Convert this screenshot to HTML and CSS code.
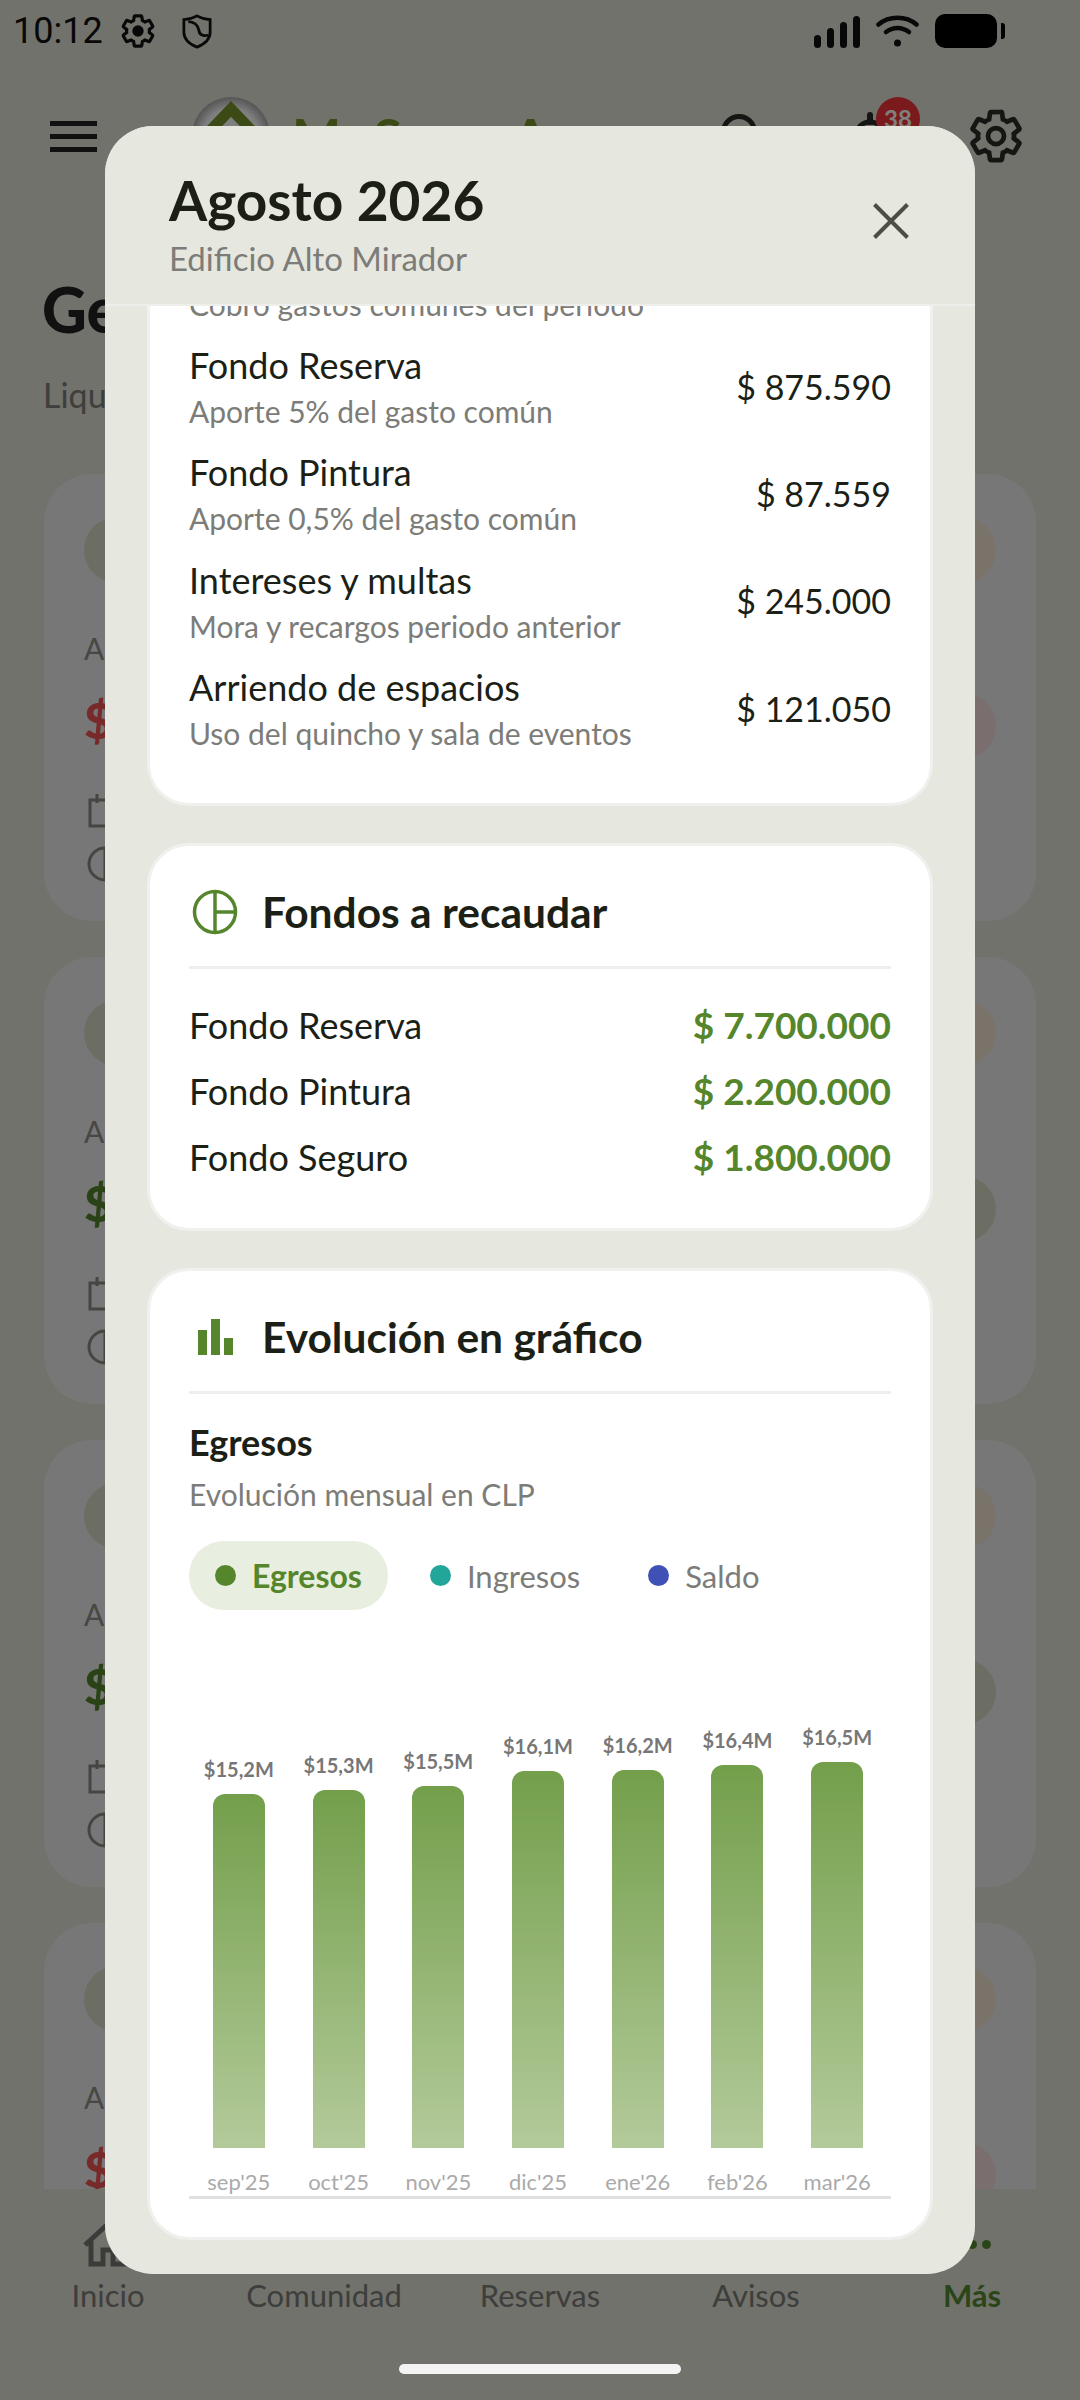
FILE: index.html
```html
<!DOCTYPE html>
<html lang="es">
<head>
  <meta charset="UTF-8" />
  <title>Agosto 2026</title>
  <link rel="stylesheet" href="styles.css">
</head>
<body>

  <svg class="defs" width="0" height="0">
    <symbol id="gear" viewBox="0 0 24 24">
      <path d="M19.14 12.94c.04-.3.06-.61.06-.94 0-.32-.02-.64-.07-.94l2.03-1.58a.49.49 0 0 0 .12-.61l-1.92-3.32a.488.488 0 0 0-.59-.22l-2.39.96c-.5-.38-1.03-.7-1.62-.94l-.36-2.54a.484.484 0 0 0-.48-.41h-3.84c-.24 0-.43.17-.47.41l-.36 2.54c-.59.24-1.13.57-1.62.94l-2.39-.96c-.22-.08-.47 0-.59.22L2.74 8.87c-.12.21-.08.47.12.61l2.03 1.58c-.05.3-.09.63-.09.94s.02.64.07.94l-2.03 1.58a.49.49 0 0 0-.12.61l1.92 3.32c.12.22.37.29.59.22l2.39-.96c.5.38 1.03.7 1.62.94l.36 2.54c.05.24.24.41.48.41h3.84c.24 0 .44-.17.47-.41l.36-2.54c.59-.24 1.13-.56 1.62-.94l2.39.96c.22.08.47 0 .59-.22l1.92-3.32c.12-.22.07-.47-.12-.61l-2.01-1.58z"/>
    </symbol>
    <symbol id="cal" viewBox="0 0 36 36">
      <path d="M3 7h30v26H3zM10 1v9M26 1v9" fill="none" stroke="#8a8a86" stroke-width="3"/>
    </symbol>
    <symbol id="pie" viewBox="0 0 36 36">
      <path d="M18 2a16 16 0 1 0 0 32a16 16 0 1 0 0-32zM18 2v32" fill="none" stroke="#8a8a86" stroke-width="3"/>
    </symbol>
  </svg>

  <div class="page">
    <div class="status-bar">
      <span class="clock">10:12</span>
      <svg class="st-gear" viewBox="0 0 24 24"><use href="#gear" fill="none" stroke="#111" stroke-width="2"/><circle cx="12" cy="12" r="3.6" fill="#111"/></svg>
      <svg class="st-shield" viewBox="0 0 24 28" fill="none" stroke="#111" stroke-width="2.2"><path d="M12 1.500c3.500 2 7 2.800 10.500 3v10c0 5.500-4.500 9.500-10.500 12C6 24 1.500 20 1.500 14.500v-10C5 4.300 8.500 3.500 12 1.500z"/><path d="M5 6c4.500 0 8 3 8.500 7s3.500 5 7.500 4"/></svg>
      <div class="st-right">
        <div class="signal"><i class="s1"></i><i class="s2"></i><i class="s3"></i><i class="s4"></i></div>
        <svg class="wifi" viewBox="0 0 43 32" fill="none" stroke="#111" stroke-width="4.500" stroke-linecap="round"><path d="M2.500 9.500C13 .5 30 .5 40.500 9.500"/><path d="M10 17c7-5.500 16-5.500 23 0"/><circle cx="21.500" cy="28" r="3.500" fill="#111" stroke="none"/></svg>
        <div class="battery"></div>
        <div class="battery-nub"></div>
      </div>
    </div>

    <div class="app-bar">
      <div class="burger"><i></i><i></i><i></i></div>
      <div class="logo">
        <svg viewBox="0 0 78 78"><defs><radialGradient id="lg"><stop offset=".7" stop-color="#fff"/><stop offset="1" stop-color="#aaa"/></radialGradient></defs><circle cx="39" cy="39" r="39" fill="url(#lg)"/><path d="M16 36L39 12l23 24" fill="none" stroke="#78942a" stroke-width="11"/></svg>
      </div>
      <span class="brand">MoSomoA</span>
      <div class="app-actions">
        <svg class="search" viewBox="0 0 48 48" fill="none" stroke="#2a2a28" stroke-width="5"><circle cx="20" cy="20" r="15.500"/><path d="M31 31l13 13"/></svg>
        <div class="bell">
          <svg viewBox="0 0 48 48" fill="none" stroke="#2a2a28" stroke-width="6" stroke-linecap="round"><path d="M24 3v7"/><path d="M10 36V24c0-8 6-14 14-14s14 6 14 14v12z" stroke-width="5"/></svg>
          <span class="badge">38</span>
        </div>
        <svg class="app-gear" viewBox="0 0 24 24"><use href="#gear" fill="none" stroke="#2a2a28" stroke-width="1.900"/><circle cx="12" cy="12" r="3.200" fill="none" stroke="#2a2a28" stroke-width="1.900"/></svg>
      </div>
    </div>

    <h1 class="page-title">Gestión de gastos</h1>
    <p class="page-sub">Liquidaciones por período</p>

    <div class="bg-list">
      <div class="bg-card">
        <div class="bg-top"><span class="blob"></span><span class="blob tone-warm"></span></div>
        <div class="bg-label">A pagar</div>
        <div class="bg-amount"><span class="money money-red">$ 245.000</span><span class="blob tone-red"></span></div>
        <div class="bg-meta first"><svg class="meta-icon"><use href="#cal"/></svg></div>
        <div class="bg-meta"><svg class="meta-icon"><use href="#pie"/></svg></div>
      </div>
      <div class="bg-card">
        <div class="bg-top"><span class="blob"></span><span class="blob tone-warm"></span></div>
        <div class="bg-label">A pagar</div>
        <div class="bg-amount"><span class="money money-green">$ 310.200</span><span class="blob"></span></div>
        <div class="bg-meta first"><svg class="meta-icon"><use href="#cal"/></svg></div>
        <div class="bg-meta"><svg class="meta-icon"><use href="#pie"/></svg></div>
      </div>
      <div class="bg-card">
        <div class="bg-top"><span class="blob"></span><span class="blob tone-warm"></span></div>
        <div class="bg-label">A pagar</div>
        <div class="bg-amount"><span class="money money-green">$ 298.400</span><span class="blob"></span></div>
        <div class="bg-meta first"><svg class="meta-icon"><use href="#cal"/></svg></div>
        <div class="bg-meta"><svg class="meta-icon"><use href="#pie"/></svg></div>
      </div>
      <div class="bg-card">
        <div class="bg-top"><span class="blob"></span><span class="blob tone-warm"></span></div>
        <div class="bg-label">A pagar</div>
        <div class="bg-amount"><span class="money money-red">$ 120.000</span><span class="blob tone-red"></span></div>
      </div>
    </div>

    <nav class="bottom-nav">
      <div class="nav-item">
        <svg class="nav-icon" viewBox="0 0 52 46" fill="none" stroke="#777773" stroke-width="5"><path d="M3 24L26 3l23 21M9 20v23h12V29h10v14h12V20"/></svg>
        <span>Inicio</span>
      </div>
      <div class="nav-item"><i class="nav-icon"></i><span>Comunidad</span></div>
      <div class="nav-item"><i class="nav-icon"></i><span>Reservas</span></div>
      <div class="nav-item"><i class="nav-icon"></i><span>Avisos</span></div>
      <div class="nav-item active">
        <div class="nav-icon dots"><i></i><i></i><i></i></div>
        <span>Más</span>
      </div>
    </nav>
  </div>

  <div class="scrim"></div>

  <div class="modal">
    <div class="modal-head">
      <div>
        <h2 class="modal-title">Agosto 2026</h2>
        <p class="modal-sub">Edificio Alto Mirador</p>
      </div>
      <svg class="close" viewBox="0 0 36 36" fill="none" stroke="#4b4e45" stroke-width="4"><path d="M1.500 1.500l33 33M34.500 1.500l-33 33"/></svg>
    </div>

    <div class="modal-body">
      <section class="card card-lines">
        <div class="line-rows">
          <div class="line-row">
            <div><div class="line-name">Gastos comunes</div><div class="line-note">Cobro gastos comunes del periodo</div></div>
            <div class="line-val">$ 17.511.800</div>
          </div>
          <div class="line-row">
            <div><div class="line-name">Fondo Reserva</div><div class="line-note">Aporte 5% del gasto común</div></div>
            <div class="line-val">$ 875.590</div>
          </div>
          <div class="line-row">
            <div><div class="line-name">Fondo Pintura</div><div class="line-note">Aporte 0,5% del gasto común</div></div>
            <div class="line-val">$ 87.559</div>
          </div>
          <div class="line-row">
            <div><div class="line-name">Intereses y multas</div><div class="line-note">Mora y recargos periodo anterior</div></div>
            <div class="line-val">$ 245.000</div>
          </div>
          <div class="line-row">
            <div><div class="line-name">Arriendo de espacios</div><div class="line-note">Uso del quincho y sala de eventos</div></div>
            <div class="line-val">$ 121.050</div>
          </div>
        </div>
      </section>

      <section class="card">
        <div class="card-head">
          <svg class="card-icon" viewBox="0 0 46 46" fill="none" stroke="#55862c" stroke-width="3.500"><circle cx="23" cy="23" r="20.500"/><path d="M23 2.500v41M23 23h20.500"/></svg>
          <h3>Fondos a recaudar</h3>
        </div>
        <div class="fund-rows">
          <div class="fund-row"><span>Fondo Reserva</span><b>$ 7.700.000</b></div>
          <div class="fund-row"><span>Fondo Pintura</span><b>$ 2.200.000</b></div>
          <div class="fund-row"><span>Fondo Seguro</span><b>$ 1.800.000</b></div>
        </div>
      </section>

      <section class="card card-chart">
        <div class="card-head">
          <svg class="card-icon" viewBox="0 0 46 46" fill="#55862c"><rect x="6" y="16" width="9" height="25"/><rect x="19" y="5" width="9" height="36"/><rect x="32" y="24" width="9" height="17"/></svg>
          <h3>Evolución en gráfico</h3>
        </div>
        <div class="chart-title">Egresos</div>
        <div class="chart-sub">Evolución mensual en CLP</div>
        <div class="chips">
          <div class="chip on"><i class="dot dot-green"></i>Egresos</div>
          <div class="chip"><i class="dot dot-teal"></i>Ingresos</div>
          <div class="chip"><i class="dot dot-blue"></i>Saldo</div>
        </div>
        <div class="chart">
          <div class="col"><span class="val">$15,2M</span><div class="bar" style="height:354px"></div><span class="month">sep'25</span></div>
          <div class="col"><span class="val">$15,3M</span><div class="bar" style="height:358px"></div><span class="month">oct'25</span></div>
          <div class="col"><span class="val">$15,5M</span><div class="bar" style="height:362px"></div><span class="month">nov'25</span></div>
          <div class="col"><span class="val">$16,1M</span><div class="bar" style="height:377px"></div><span class="month">dic'25</span></div>
          <div class="col"><span class="val">$16,2M</span><div class="bar" style="height:378px"></div><span class="month">ene'26</span></div>
          <div class="col"><span class="val">$16,4M</span><div class="bar" style="height:383px"></div><span class="month">feb'26</span></div>
          <div class="col"><span class="val">$16,5M</span><div class="bar" style="height:386px"></div><span class="month">mar'26</span></div>
        </div>
      </section>
    </div>
  </div>

  <div class="home-bar"></div>

</body>
</html>
```

FILE: styles.css
```css
:root {
  --font: "Lato", "Noto Sans", sans-serif;
  --green: #55862c;
  --ink: #1c1f16;
  --muted: #7c7c78;
  --modal-bg: #e6e7df;
}

* {
  box-sizing: border-box;
}

body {
  margin: 0;
  width: 1080px;
  height: 2400px;
  position: relative;
  overflow: hidden;
  font-family: var(--font);
  color: var(--ink);
}

.defs {
  position: absolute;
}

/* page behind the dialog */

.page {
  height: 2400px;
  background: #e3e4d7;
  display: flex;
  flex-direction: column;
}

.status-bar {
  height: 62px;
  padding: 14px 75px 0 13px;
  display: flex;
  align-items: flex-start;
}

.clock {
  font-family: Roboto, sans-serif;
  font-size: 36px;
  line-height: 34px;
  color: #111;
  width: 104px;
}

.st-gear {
  width: 38px;
  height: 38px;
  margin: -2px 0 0 2px;
}

.st-shield {
  width: 30px;
  height: 35px;
  margin: 0 0 0 25px;
}

.st-right {
  margin-left: auto;
  display: flex;
  align-items: flex-start;
}

.signal {
  display: flex;
  align-items: flex-end;
  gap: 6px;
  height: 33px;
  margin: 1px 16px 0 0;
}

.signal i {
  width: 7px;
  background: #111;
  border-radius: 4px;
}

.s1 { height: 13px; }
.s2 { height: 20px; }
.s3 { height: 26px; }
.s4 { height: 32px; }

.wifi {
  width: 43px;
  height: 32px;
  margin: 1px 16px 0 0;
}

.battery {
  width: 62px;
  height: 34px;
  background: #000;
  border-radius: 10px;
}

.battery-nub {
  width: 4px;
  height: 16px;
  margin: 9px 0 0 4px;
  background: #000;
  border-radius: 0 3px 3px 0;
}

.app-bar {
  height: 148px;
  padding: 0 54px 0 50px;
  display: flex;
  align-items: center;
}

.burger {
  width: 47px;
  display: flex;
  flex-direction: column;
  gap: 8px;
}

.burger i {
  height: 5px;
  background: #222;
}

.logo {
  width: 78px;
  height: 78px;
  margin-left: 95px;
}

.logo svg {
  display: block;
}

.brand {
  font-size: 52px;
  font-weight: 700;
  letter-spacing: 2px;
  color: #78942a;
  margin-left: 22px;
}

.app-actions {
  margin-left: auto;
  display: flex;
  align-items: center;
}

.search {
  width: 48px;
  height: 48px;
}

.bell {
  width: 48px;
  height: 48px;
  margin-left: 79px;
  position: relative;
}

.badge {
  position: absolute;
  top: -15px;
  left: 30px;
  width: 44px;
  height: 44px;
  border-radius: 50%;
  background: #f43438;
  color: #fff;
  font-size: 24px;
  font-weight: 700;
  text-align: center;
  line-height: 44px;
}

.app-gear {
  width: 60px;
  height: 60px;
  margin-left: 72px;
}

.page-title {
  margin: 64px 0 0 42px;
  font-size: 62px;
  line-height: 70px;
  font-weight: 900;
  color: #222;
}

.page-sub {
  margin: 29px 0 0 43px;
  font-size: 34px;
  line-height: 44px;
  color: #7c7c78;
}

.bg-list {
  margin: 57px 44px 0;
  height: 1715px;
  overflow: hidden;
}

.bg-card {
  height: 447px;
  margin-bottom: 36px;
  padding: 43px 40px 0;
  background: #eeeeee;
  border-radius: 48px;
}

.bg-top,
.bg-amount {
  display: flex;
  justify-content: space-between;
  align-items: center;
}

.blob {
  width: 66px;
  height: 66px;
  border-radius: 50%;
  background: #d8dac6;
}

.tone-warm { background: #f4e6d4; }
.tone-red { background: #f4dcdc; }

.bg-label {
  margin-top: 47px;
  font-size: 30px;
  line-height: 36px;
  color: #8e8e8a;
}

.bg-amount {
  margin-top: 24px;
}

.money {
  font-size: 50px;
  font-weight: 900;
  margin-bottom: 12px;
}

.money-red { color: #f05555; }
.money-green { color: var(--green); }

.bg-meta {
  height: 36px;
  margin-top: 17px;
}

.bg-meta.first {
  margin-top: 31px;
}

.meta-icon {
  display: block;
  width: 36px;
  height: 36px;
  margin-left: 3px;
}

.bottom-nav {
  flex: 1;
  display: grid;
  grid-template-columns: repeat(5, 216px);
}

.nav-item {
  display: flex;
  flex-direction: column;
  align-items: center;
  padding-top: 32px;
  font-size: 31px;
  line-height: 36px;
  color: #7c7c78;
}

.nav-icon {
  display: block;
  width: 52px;
  height: 46px;
  margin-bottom: 10px;
}

.nav-item.active {
  color: #558b2f;
  font-weight: 700;
}

.dots {
  display: flex;
  justify-content: center;
  align-items: center;
  gap: 5px;
}

.dots i {
  width: 9px;
  height: 9px;
  border-radius: 50%;
  background: #558b2f;
}

.scrim {
  position: absolute;
  inset: 0;
  background: rgba(0, 0, 0, 0.5);
}

/* dialog */

.modal {
  position: absolute;
  top: 126px;
  left: 105px;
  width: 870px;
  height: 2148px;
  background: var(--modal-bg);
  border-radius: 48px;
  overflow: hidden;
  display: flex;
  flex-direction: column;
}

.modal-head {
  height: 180px;
  flex: none;
  padding: 44px 66px 0 64px;
  display: flex;
  justify-content: space-between;
  align-items: flex-start;
  border-bottom: 2px solid #eeeeea;
  position: relative;
  z-index: 1;
  background: var(--modal-bg);
}

.modal-title {
  margin: 0;
  font-size: 55px;
  line-height: 60px;
  font-weight: 700;
}

.modal-sub {
  margin: 8px 0 0;
  font-size: 33px;
  line-height: 40px;
  color: var(--muted);
}

.close {
  width: 36px;
  height: 36px;
  margin-top: 33px;
}

.modal-body {
  flex: 1;
  min-height: 0;
  padding: 0 42px 34px;
  display: flex;
  flex-direction: column;
  justify-content: flex-end;
  gap: 37px;
}

.card {
  flex: none;
  background: #fff;
  border: 3px solid #f0f0ee;
  border-radius: 42px;
  padding: 42px 39px 48px;
}

.card-lines {
  padding-bottom: 47px;
}

.card-chart {
  padding-bottom: 38px;
}

.line-rows {
  display: flex;
  flex-direction: column;
  gap: 15.3px;
}

.line-row {
  display: flex;
  justify-content: space-between;
  align-items: center;
}

.line-name {
  font-size: 36px;
  line-height: 46px;
}

.line-note {
  font-size: 30px;
  line-height: 46px;
  color: var(--muted);
}

.line-val {
  font-size: 34px;
  margin-bottom: 4px;
}

.card-head {
  display: flex;
  align-items: center;
  gap: 24px;
  padding-bottom: 30px;
  height: 81px;
  border-bottom: 3px solid #eeeeee;
}

.card-head h3 {
  margin: 0;
  font-size: 42.5px;
  line-height: 48px;
  font-weight: 700;
}

.card-icon {
  width: 46px;
  height: 46px;
  margin-left: 3px;
}

.fund-rows {
  margin-top: 33px;
  display: flex;
  flex-direction: column;
  gap: 20px;
}

.fund-row {
  display: flex;
  justify-content: space-between;
  font-size: 36px;
  line-height: 46px;
}

.fund-row b {
  font-size: 37px;
  color: var(--green);
}

.chart-title {
  margin-top: 28px;
  font-size: 36px;
  line-height: 40px;
  font-weight: 700;
}

.chart-sub {
  margin-top: 12px;
  font-size: 30px;
  line-height: 40px;
  color: var(--muted);
}

.chips {
  margin-top: 27px;
  display: flex;
}

.chip {
  height: 69px;
  padding: 0 26px;
  display: flex;
  align-items: center;
  gap: 16px;
  font-size: 31px;
  color: var(--muted);
  margin-right: 16px;
  border-radius: 35px;
}

.chip.on {
  font-size: 32px;
  background: #e8eee0;
  color: var(--green);
  font-weight: 700;
}

.dot {
  width: 21px;
  height: 21px;
  border-radius: 50%;
}

.dot-green { background: var(--green); }
.dot-teal { background: #22a699; }
.dot-blue { background: #3f51b5; }

.chart {
  margin-top: 40px;
  height: 549px;
  padding-right: 4px;
  display: grid;
  grid-template-columns: repeat(7, 1fr);
  align-items: end;
  border-bottom: 3px solid #e0e0e0;
}

.col {
  display: flex;
  flex-direction: column;
  align-items: center;
}

.val {
  font-size: 20px;
  line-height: 30px;
  margin-bottom: 10px;
  font-weight: 700;
  color: #777;
}

.bar {
  width: 52px;
  border-radius: 12px 12px 0 0;
  background: linear-gradient(to bottom, #739f4b, #b3ca9a);
}

.month {
  margin-top: 20px;
  font-size: 22px;
  line-height: 28px;
  color: #aaa;
}

.home-bar {
  position: absolute;
  left: 399px;
  top: 2364px;
  width: 282px;
  height: 10px;
  border-radius: 5px;
  background: #f3f3f3;
}
```
